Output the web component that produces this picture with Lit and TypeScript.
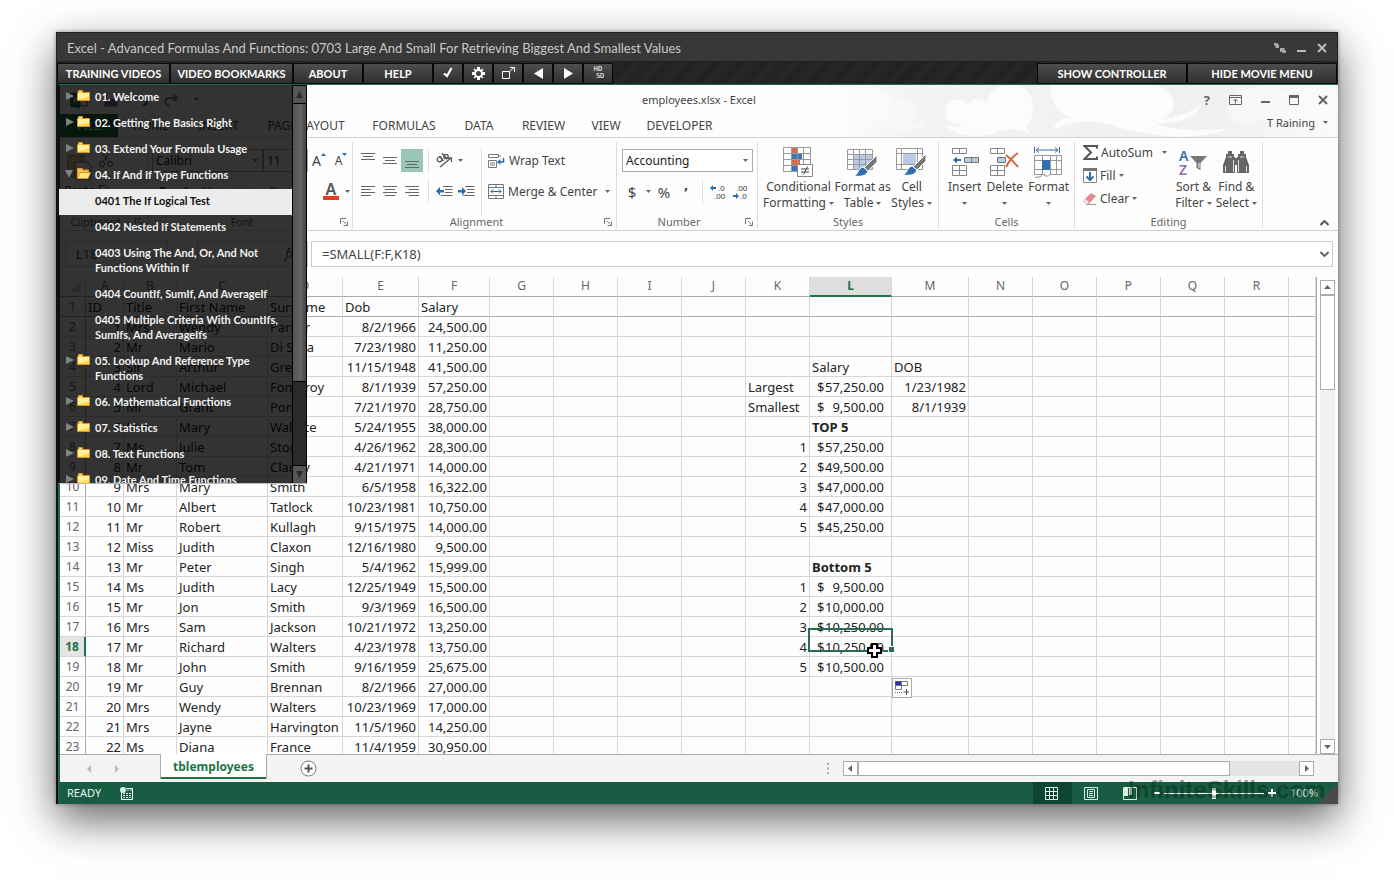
import { LitElement, html, svg, css, nothing } from "lit";
import { customElement, state } from "lit/decorators.js";
import { classMap } from "lit/directives/class-map.js";

const icon = (w: number, h: number, body: unknown) =>
  html`<svg class="ico" width=${w} height=${h} viewBox="0 0 ${w} ${h}" aria-hidden="true">${body}</svg>`;

const caret = () => icon(5, 3, svg`<path d="M0 0h5L2.5 3z" fill="#666"/>`);

const lines = (rows: number[][]) =>
  svg`${rows.map(([x, y, w]) => svg`<rect x=${x} y=${y} width=${w} height="1" fill="#666"/>`)}`;

const launcher = () =>
  icon(8, 8, svg`<path d="M.5 6V.5H6M3 3l3.500 3.500M7.500 3.500v4h-4" fill="none" stroke="#777"/>`);

const I = {
  compress: () => icon(12, 10, svg`<path d="M0 0h3l2 2 0-1v4H1l1-1-2-2zM12 10H9L7 8v1H6V5h5l-1 1 2 2z" fill="#aaa"/>`),
  min: () => icon(9, 8, svg`<path d="M0 6h9v2H0z" fill="#bbb"/>`),
  close: () => icon(10, 10, svg`<path d="M1 1l8 8M9 1L1 9" stroke="#bbb" stroke-width="2" fill="none"/>`),
  check: () => icon(12, 12, svg`<path d="M2 6.500L5 9l4.500-8" stroke="#fff" stroke-width="2.200" fill="none"/>`),
  gear: () => icon(13, 13, svg`<g fill="none" stroke="#fff"><circle cx="6.500" cy="6.500" r="3.500" stroke-width="2"/><path d="M6.500 0v3M6.500 10v3M0 6.500h3M10 6.500h3" stroke-width="3"/><path d="M2 2l2 2M9 9l2 2M11 2L9 4M4 9l-2 2" stroke-width="1.500"/></g>`),
  pop: () => icon(13, 12, svg`<path d="M.5 4.500h7v7h-7zM7 5l5-4.500M8 .5h4.500V5" fill="none" stroke="#fff"/>`),
  prev: () => icon(9, 11, svg`<path d="M9 0v11L0 5.500z" fill="#fff"/>`),
  next: () => icon(9, 11, svg`<path d="M0 0v11l9-5.500z" fill="#fff"/>`),
  folder: () => icon(13, 11, svg`<path d="M.5 2.500h1v-2h4v2h7v8H.5z" fill="#ffd94a" stroke="#d9952b"/><path d="M1 3h11v3.500L1 9.500z" fill="#fff0a0"/><path d="M2 1h3v2H2z" fill="#ffd94a"/>`),
  folderOpen: () => icon(14, 11, svg`<path d="M.5 10.500v-10h5v1.500h6v3" fill="#f3c44d" stroke="#d9952b"/><path d="M3 4.500h10.500l-2.500 6H.5z" fill="#ffe680" stroke="#d9952b"/>`),
  growFont: () => html`<span class="big-a">A</span>${icon(5, 3, svg`<path d="M0 3h5L2.500 0z" fill="#2d6da8"/>`)}`,
  shrinkFont: () => html`<span class="small-a">A</span>${icon(5, 3, svg`<path d="M0 0h5L2.500 3z" fill="#2d6da8"/>`)}`,
  top: () => icon(14, 16, lines([[0, 0, 14], [2, 3, 10], [0, 6, 14]])),
  mid: () => icon(14, 16, lines([[0, 4, 14], [2, 7, 10], [0, 10, 14]])),
  bot: () => icon(14, 16, lines([[0, 8, 14], [2, 11, 10], [0, 14, 14]])),
  left: () => icon(14, 11, lines([[0, 0, 14], [0, 3, 10], [0, 6, 14], [0, 9, 10]])),
  center: () => icon(14, 11, lines([[0, 0, 14], [2, 3, 10], [0, 6, 14], [2, 9, 10]])),
  right: () => icon(14, 11, lines([[0, 0, 14], [4, 3, 10], [0, 6, 14], [4, 9, 10]])),
  orient: () => icon(17, 15, svg`<g fill="none" stroke="#555" stroke-width="1.300"><circle cx="3.500" cy="6.500" r="2.300"/><path d="M3.500 3L7.500 8M6 0L11 6"/><circle cx="10" cy="3.500" r="2.200"/><path d="M4 14L15 5M11 5h4.500v4"/></g>`),
  outdent: () => icon(17, 11, svg`<path d="M7 1h9.500M9 4h7.500M9 7h7.500M5 10h11.500" stroke="#666" transform="translate(0 -.5)"/><path d="M0 5l4-4v3h4v2.500H4v3z" fill="#2d6da8"/>`),
  indent: () => icon(17, 11, svg`<path d="M7 1h9.500M9 4h7.500M9 7h7.500M5 10h11.500" stroke="#666" transform="translate(0 -.5)"/><path d="M8 5L4 1v3H0v2.500h4v3z" fill="#2d6da8"/>`),
  wrap: () => icon(17, 16, svg`<g fill="none" stroke="#777"><path d="M.5 1.500h10v3H.5zM.5 7.500h8v7h-8zM2 10h5M2 12h5M10 3h3"/></g><path d="M15.500 5v4H12" fill="none" stroke="#2d6da8" stroke-width="1.500"/><path d="M9 9l3.500-3v6z" fill="#2d6da8"/>`),
  merge: () => icon(16, 15, svg`<path d="M.5 .5h15v14H.5zM.5 3.500h15M.5 11.500h15M8 .5v3M8 11.500v3" fill="none" stroke="#777"/><path d="M3 7.500h10M5 5.500l-2 2 2 2M11 5.500l2 2-2 2" fill="none" stroke="#2d6da8"/>`),
  decInc: () => icon(16, 16, svg`<path d="M0 4l3-3v2h3v2H3v2z" fill="#2d6da8"/><g font-family="Liberation Sans" font-size="8" fill="#333"><text x="8" y="7">.0</text><text x="4" y="15">.00</text></g>`),
  decDec: () => icon(16, 16, svg`<path d="M7 12L4 9v2H1v2h3v2z" fill="#2d6da8"/><g font-family="Liberation Sans" font-size="8" fill="#333"><text x="4" y="7">.00</text><text x="8" y="15">.0</text></g>`),
  cond: () => icon(31, 31, svg`<path d="M9 1h6v6H9zM9 13h8v6H9z" fill="#d9694a"/><path d="M9 7h10v6H9zM9 19h5v5H9z" fill="#3b74b9"/><path d="M.5 .5h27v24H.5zM.5 6.500h27M.5 12.500h27M.5 18.500h27M8.500 .5v24M14.500 .5v24M20.500 .5v24" fill="none" stroke="#999"/><path d="M14.500 17.500h15v12h-15z" fill="#fff" stroke="#888"/><path d="M18 22h8M18 25h8M24.500 19.500l-4 8" stroke="#444" fill="none"/>`),
  table: () => icon(31, 29, svg`<path d="M7 7h18v14H7z" fill="#b9cbe6"/><path d="M.5 1.500h25v20H.5zM.5 6.500h25M.5 11.500h25M.5 16.500h25M6.500 1.500v20M12.500 1.500v20M18.500 1.500v20" fill="none" stroke="#999"/><path d="M30 7v7l-9 9-4-3z" fill="#777" stroke="#fff"/><path d="M16 19l5 4c-2 5-7 6-14 5 4-1 4-8 9-9z" fill="#2f6fb0" stroke="#fff"/>`),
  style: () => icon(31, 31, svg`<path d="M.5 1.500h26v21H.5zM.5 6.500h26M.5 17.500h26M5.500 1.500v21M21.500 1.500v21" fill="none" stroke="#999"/><path d="M7 7h13v10H7z" fill="#b9cbe6"/><path d="M30 7v7l-9 9-4-3z" fill="#777" stroke="#fff"/><path d="M16 19l5 4c-2 5-7 6-14 5 4-1 4-8 9-9z" fill="#2f6fb0" stroke="#fff"/>`),
  insert: () => icon(28, 28, svg`<path d="M1.500 .5h14v5h-14zM8.500 .5v5M1.500 17.500h14v10h-14zM1.500 22.500h14M8.500 17.500v10" fill="#fff" stroke="#888"/><path d="M13.500 9.500h14v5h-14zM20.500 9.500v5" fill="#b9cbe6" stroke="#777"/><path d="M2 12l4-3.500v2.500h4v2H6v2.500z" fill="#2d6da8"/>`),
  del: () => icon(31, 28, svg`<path d="M1.500 .5h14v5h-14zM8.500 .5v5M1.500 17.500h14v10h-14zM1.500 22.500h14M8.500 17.500v10" fill="#fff" stroke="#888"/><path d="M8.500 9.500h8v5h-8z" fill="#b9cbe6" stroke="#777"/><path d="M17 7c4 3 8 7 12 12M29 5c-5 3-9 8-12 14" stroke="#d6643c" stroke-width="2" fill="none"/>`),
  format: () => icon(29, 31, svg`<path d="M.5 0v6M25.500 0v6M2 3h22M5 .5L2 3l3 2.500M21 .5L24 3l-3 2.500" fill="none" stroke="#2d6da8"/><path d="M.5 8.500h27v19H.5zM.5 13.500h27M.5 22.500h27M8.500 8.500v19M16.500 8.500v19M22.500 8.500v19" fill="none" stroke="#999"/><path d="M8 13h8v10H8z" fill="#2f6fb0"/><path d="M1 30c4 1 7-1 8-3 3 3 6 3 8-1" fill="#fff" stroke="#888"/>`),
  sum: () => icon(15, 15, svg`<path d="M14 3.500V1H1.500L8 7.500 1.500 14H14v-2.500" fill="none" stroke="#555" stroke-width="2"/>`),
  fill: () => icon(14, 15, svg`<path d="M.5 .5h13v14H.5z" fill="#fff" stroke="#888"/><path d="M0 0h14v3H0z" fill="#777"/><path d="M7 4v8M3.500 8.500L7 12l3.500-3.500" stroke="#2d6da8" stroke-width="2" fill="none"/>`),
  clear: () => icon(14, 12, svg`<path d="M8 0l5 3-7 8H3L0 8z" fill="#e58b8d"/><path d="M2.500 6L6 9l-1.500 2H3L0 8z" fill="#f6d9d9"/><path d="M3 11.500h10" stroke="#999"/>`),
  sort: () => icon(30, 30, svg`<g font-family="Noto Sans" font-size="14" font-weight="600"><text x="1" y="14" fill="#2f6fb0">A</text><text x="1" y="28" fill="#8c6bab">Z</text></g><path d="M12 9h17l-6.500 7v7l-4-2v-5z" fill="#777"/><path d="M21 16v5" stroke="#fff"/>`),
  find: () => icon(26, 24, svg`<g fill="#666"><path d="M5 1h4v3h2v3h1v16H0V15l3-8V4h2zM17 1h4v3h2v3l3 8v8H14V7h1V4h2z"/><path d="M11 8h4v7h-4z"/></g><path d="M2.500 16v6M23.500 16v6M10.500 10v12M15.500 10v12M5 7h4M17 7h4" stroke="#ddd"/>`),
  dispOpts: () => icon(13, 10, svg`<path d="M.5 .5h12v9H.5zM.5 2.500h12M6.500 8.500v-4M4.500 6l2-2 2 2" fill="none" stroke="#666"/>`),
  xMin: () => icon(9, 10, svg`<path d="M0 6h9v2H0z" fill="#666"/>`),
  xMax: () => icon(10, 10, svg`<path d="M.5 .5h9v9h-9z" fill="none" stroke="#666"/><path d="M0 0h10v3H0z" fill="#666"/>`),
  xClose: () => icon(10, 10, svg`<path d="M1 1l8 8M9 1L1 9" stroke="#666" stroke-width="2" fill="none"/>`),
  addSheet: () => icon(17, 17, svg`<circle cx="8.500" cy="8.500" r="7.500" fill="#fff" stroke="#777"/><path d="M8.500 4.500v8M4.500 8.500h8" stroke="#555" stroke-width="2"/>`),
  macro: () => icon(13, 13, svg`<path d="M1.500 4v8.500h11v-11H6" fill="none" stroke="#fff"/><circle cx="3" cy="3" r="3" fill="#d7efe4"/><path d="M3 6.500h9M3 8.500h9M3 10.500h9M7 3h5" stroke="#d7efe4" stroke-dasharray="2 1"/>`),
  vNormal: () => icon(14, 13, svg`<path d="M.5 .5h12v12H.5zM.5 4.500h12M.5 8.500h12M4.500 .5v12M8.500 .5v12" fill="none" stroke="#d7efe4"/>`),
  vPage: () => icon(15, 13, svg`<path d="M.5 .5h13v12H.5zM3.500 2.500h7v8h-7zM5 4.500h4M5 6.500h4M5 8.500h4" fill="none" stroke="#d7efe4"/>`),
  vBreak: () => icon(14, 13, svg`<path d="M.5 .5h13v12H.5z" fill="none" stroke="#d7efe4"/><path d="M1 1h4v8H1zM6 1h3v7H6z" fill="#d7efe4"/>`),
  cross: () => icon(16, 16, svg`<path d="M5 1h5v4h4v5h-4v4H5v-4H1V5h4z" fill="#fff" stroke="#000" stroke-width="2"/>`),
  paste: () => icon(26, 28, svg`<path d="M2 3h16v22H2z" fill="#e8c98a" stroke="#999"/><path d="M9 10h12l4 4v13H9z" fill="#fff" stroke="#777"/>`),
  cut: () => icon(14, 14, svg`<circle cx="3" cy="10" r="2.500" fill="none" stroke="#456"/><circle cx="11" cy="10" r="2.500" fill="none" stroke="#456"/><path d="M4 8l6-8M10 8L4 0" stroke="#456"/>`),
  copy: () => icon(14, 14, svg`<path d="M.5 .5h6l2 2v8h-8zM5.500 4.500h6l2 2v7h-8z" fill="#fff" stroke="#456"/>`),
};

interface Entry { label: string; kind: "folder" | "open" | "clip"; }
const ENTRIES: Entry[] = [
  { label: "01. Welcome", kind: "folder" },
  { label: "02. Getting The Basics Right", kind: "folder" },
  { label: "03. Extend Your Formula Usage", kind: "folder" },
  { label: "04. If And If Type Functions", kind: "open" },
  { label: "0401 The If Logical Test", kind: "clip" },
  { label: "0402 Nested If Statements", kind: "clip" },
  { label: "0403 Using The And, Or, And Not Functions Within If", kind: "clip" },
  { label: "0404 CountIf, SumIf, And AverageIf", kind: "clip" },
  { label: "0405 Multiple Criteria With CountIfs, SumIfs, And AverageIfs", kind: "clip" },
  { label: "05. Lookup And Reference Type Functions", kind: "folder" },
  { label: "06. Mathematical Functions", kind: "folder" },
  { label: "07. Statistics", kind: "folder" },
  { label: "08. Text Functions", kind: "folder" },
  { label: "09. Date And Time Functions", kind: "folder" },
];

const COLS = "ABCDEFGHIJKLMNOPQR".split("");
const WIDTHS = [38, 53, 91, 75, 76, 71, 64, 64, 64, 64, 64, 82, 77, 64, 64, 64, 64, 64];

const PEOPLE: string[][] = [
  ["ID", "Title", "First Name", "Surname", "Dob", "Salary"],
  ["1", "Mrs", "Wendy", "Parker", "8/2/1966", "24,500.00"],
  ["2", "Mr", "Mario", "Di Silva", "7/23/1980", "11,250.00"],
  ["3", "Sir", "Arthur", "Grey", "11/15/1948", "41,500.00"],
  ["4", "Lord", "Michael", "Fonteroy", "8/1/1939", "57,250.00"],
  ["5", "Mr", "Grant", "Pond", "7/21/1970", "28,750.00"],
  ["6", "Mrs", "Mary", "Wallace", "5/24/1955", "38,000.00"],
  ["7", "Ms", "Julie", "Stone", "4/26/1962", "28,300.00"],
  ["8", "Mr", "Tom", "Clancy", "4/21/1971", "14,000.00"],
  ["9", "Mrs", "Mary", "Smith", "6/5/1958", "16,322.00"],
  ["10", "Mr", "Albert", "Tatlock", "10/23/1981", "10,750.00"],
  ["11", "Mr", "Robert", "Kullagh", "9/15/1975", "14,000.00"],
  ["12", "Miss", "Judith", "Claxon", "12/16/1980", "9,500.00"],
  ["13", "Mr", "Peter", "Singh", "5/4/1962", "15,999.00"],
  ["14", "Ms", "Judith", "Lacy", "12/25/1949", "15,500.00"],
  ["15", "Mr", "Jon", "Smith", "9/3/1969", "16,500.00"],
  ["16", "Mrs", "Sam", "Jackson", "10/21/1972", "13,250.00"],
  ["17", "Mr", "Richard", "Walters", "4/23/1978", "13,750.00"],
  ["18", "Mr", "John", "Smith", "9/16/1959", "25,675.00"],
  ["19", "Mr", "Guy", "Brennan", "8/2/1966", "27,000.00"],
  ["20", "Mrs", "Wendy", "Walters", "10/23/1969", "17,000.00"],
  ["21", "Mrs", "Jayne", "Harvington", "11/5/1960", "14,250.00"],
  ["22", "Ms", "Diana", "France", "11/4/1959", "30,950.00"],
];

const SUMMARY: Record<string, string> = {
  L4: "Salary", M4: "DOB",
  K5: "Largest", L5: "$57,250.00", M5: "1/23/1982",
  K6: "Smallest", L6: "$9,500.00", M6: "8/1/1939",
  L7: "TOP 5",
  K8: "1", L8: "$57,250.00", K9: "2", L9: "$49,500.00", K10: "3", L10: "$47,000.00",
  K11: "4", L11: "$47,000.00", K12: "5", L12: "$45,250.00",
  L14: "Bottom 5",
  K15: "1", L15: "$9,500.00", K16: "2", L16: "$10,000.00", K17: "3", L17: "$10,250.00",
  K18: "4", L18: "$10,250.00", K19: "5", L19: "$10,500.00",
};

@customElement("course-menu")
export class CourseMenu extends LitElement {
  @state() private current = 4;

  static styles = css`
    :host { display: grid; grid-template-columns: 1fr 15px; box-sizing: border-box; overflow: hidden;
      border-left: 1px solid #111; border-bottom: 1px solid #bbb;
      background: rgba(0, 0, 0, 0.8); font: 700 11px/15px Lato, sans-serif; color: #f2f2f2; }
    .list { list-style: none; margin: 0; padding: 0; overflow: hidden; }
    .item { display: grid; grid-template-columns: 9px 15px 1fr; column-gap: 3px; width: 100%; border: 0;
      padding: 4px 10px 7px 6px; background: none; color: inherit; font: inherit; text-align: left; cursor: pointer; }
    .item.clip { display: block; padding-left: 36px; }
    .item.clip.on { background: #ececec; color: #111; }
    .arrow { margin-top: 3px; }
    .fold { margin-top: 1px; }
    .bar { display: flex; flex-direction: column; background: #2a2a2a; border: solid #000; border-width: 1px 1px 0 1px; }
    .step { height: 17px; box-sizing: border-box; border: 0; padding: 0; background: #555; display: grid; place-items: center; }
    .thumb { flex: 0 0 277px; background: linear-gradient(90deg, #555, #646464 60%, #444); border: solid #000; border-width: 1px 0; }
    .rest { flex: 1; border-bottom: 1px solid #000; }
    .ico { display: block; }
  `;

  render() {
    return html`
      <ul class="list">
        ${ENTRIES.map((e, i) => html`<li>
          <button class=${classMap({ item: true, clip: e.kind === "clip", on: i === this.current })}
            @click=${() => (this.current = i)}>
            ${e.kind === "clip" ? nothing : html`
              <span class="arrow">${e.kind === "open"
                ? icon(9, 8, svg`<path d="M0 0h8L4 8z" fill="#7d8583"/>`)
                : icon(9, 8, svg`<path d="M1 0v8l8-4z" fill="#7d8583"/>`)}</span>
              <span class="fold">${e.kind === "open" ? I.folderOpen() : I.folder()}</span>`}
            <span>${e.label}</span>
          </button></li>`)}
      </ul>
      <div class="bar">
        <button class="step" aria-label="Scroll up">${icon(7, 7, svg`<path d="M0 7h7L3.500 0z" fill="#2c2c2c"/>`)}</button>
        <div class="thumb"></div><div class="rest"></div>
        <button class="step" aria-label="Scroll down">${icon(7, 7, svg`<path d="M0 0h7L3.500 7z" fill="#2c2c2c"/>`)}</button>
      </div>`;
  }
}

@customElement("excel-ribbon")
export class ExcelRibbon extends LitElement {
  static styles = css`
    :host { display: flex; box-sizing: border-box; height: 93px; padding: 4px 0 2px; position: relative;
      border-bottom: 1px solid #d0d0d0; background: #fefefe; font: 12px/16px "Noto Sans", sans-serif; color: #444; }
    .ico { display: block; flex: none; }
    .group { box-sizing: border-box; display: flex; flex-direction: column; border-right: 1px solid #ddd; padding: 0 4px; position: relative; }
    .clipboard { width: 88px; } .font { width: 205px; } .align { width: 264px; } .number { width: 141px; }
    .styles { width: 181px; } .cells { width: 136px; } .edit { width: 188px; }
    .body { flex: 1; display: flex; padding-top: 7px; }
    .foot { display: flex; align-items: center; font-size: 11px; line-height: 12px; color: #666; text-align: center; }
    .foot span { flex: 1; }
    .foot .ico { margin-left: 8px; }
    button { border: 0; background: none; padding: 0; font: inherit; color: inherit; display: flex; align-items: center; cursor: pointer; white-space: nowrap; }
    .rows { display: grid; grid-auto-rows: 23px; row-gap: 8px; align-content: start; }
    .font .rows { flex: 1; }
    .row { display: flex; align-items: center; }
    .sq { width: 22px; height: 23px; justify-content: center; }
    .sq.on { background: #9bc8b6; }
    .drop { width: 10px; display: grid; place-items: center; }
    .far { margin-left: auto; }
    .sep { width: 1px; height: 23px; background: #ddd; margin: 0 4px 0 5px; }
    .wide { gap: 4px; padding-left: 6px; }
    .wide .ico:last-child { margin-left: 3px; }
    .wrapcol { border-left: 1px solid #ddd; margin-left: 4px; }
    select { appearance: none; border: 1px solid #ababab; border-radius: 0; background: #fff; color: #222; font: inherit; height: 23px; padding: 0 3px; margin: 0; }
    .pick { position: relative; display: flex; align-items: center; }
    .pick .ico { position: absolute; right: 5px; pointer-events: none; }
    .name { width: 111px; } .size { width: 45px; } .fmt { width: 131px; margin-left: 1px; }
    .big-a { font-size: 14px; } .small-a { font-size: 12px; }
    .sup { align-items: flex-start; justify-content: center; width: 22px; }
    .color { border-bottom: 4px solid #e33a22; font-size: 16px; line-height: 13px; font-weight: 600; padding: 0 3px; color: #555; }
    .glyph { font-size: 15px; }
    .gap-l { margin-left: 5px; }
    .big { flex-direction: column; align-items: center; text-align: center; }
    .pic { height: 34px; display: grid; place-items: center; }
    .two { display: flex; align-items: center; gap: 3px; }
    .down { height: 16px; display: flex; align-items: center; }
    .bigs { padding-top: 3px; justify-content: space-between; }
    .styles .bigs { padding-left: 1px; padding-right: 2px; }
    .cells .bigs { padding-left: 5px; padding-right: 1px; }
    .stack { display: grid; grid-auto-rows: 23px; align-content: start; margin-top: -8px; padding-left: 4px; }
    .stack button { gap: 3px; }
    .stack .gap { margin-left: 6px; }
    .azs { display: flex; gap: 4px; margin: -4px 0 0 auto; padding-right: 1px; }
    .fold { position: absolute; right: 9px; bottom: 4px; }
  `;

  private foot(label: string, launch = false) {
    return html`<div class="foot"><span>${label}</span>${launch ? launcher() : nothing}</div>`;
  }

  private big(pic: unknown, a: string, b?: string) {
    return html`<button class="big"><span class="pic">${pic}</span><span>${a}</span>
      ${b ? html`<span class="two">${b}${caret()}</span>` : html`<span class="down">${caret()}</span>`}</button>`;
  }

  render() {
    return html`
      <div class="group clipboard">
        <div class="body">
          <button class="big"><span class="pic">${I.paste()}</span><span>Paste</span></button>
          <div class="rows"><button class="sq" aria-label="Cut">${I.cut()}</button><button class="sq" aria-label="Copy">${I.copy()}</button></div>
        </div>${this.foot("Clipboard", true)}
      </div>
      <div class="group font">
        <div class="body"><div class="rows">
          <div class="row">
            <label class="pick"><select class="name" aria-label="Font"><option>Calibri</option></select>${caret()}</label>
            <label class="pick"><select class="size" aria-label="Font size"><option>11</option></select></label>
            <button class="sup" aria-label="Increase font size">${I.growFont()}</button>
            <button class="sup" aria-label="Decrease font size">${I.shrinkFont()}</button>
          </div>
          <div class="row">
            <button class="sq"><b>B</b></button><button class="sq"><i>I</i></button><button class="sq"><u>U</u></button>
            <span class="sep"></span><button class="sq" aria-label="Borders">${I.vNormal()}</button>
            <span class="sep"></span><button class="sq" aria-label="Fill color">${I.clear()}</button>
            <button class="sq far" aria-label="Font color"><span class="color">A</span></button>
            <span class="drop">${caret()}</span>
          </div>
        </div></div>${this.foot("Font", true)}
      </div>
      <div class="group align">
        <div class="body">
          <div class="rows">
            <div class="row"><button class="sq" aria-label="Top align">${I.top()}</button><button class="sq" aria-label="Middle align">${I.mid()}</button><button class="sq on" aria-label="Bottom align">${I.bot()}</button><span class="sep"></span><button class="sq" aria-label="Orientation">${I.orient()}</button><span class="drop">${caret()}</span></div>
            <div class="row"><button class="sq" aria-label="Align left">${I.left()}</button><button class="sq" aria-label="Center">${I.center()}</button><button class="sq" aria-label="Align right">${I.right()}</button><span class="sep"></span><button class="sq" aria-label="Decrease indent">${I.outdent()}</button><button class="sq" aria-label="Increase indent">${I.indent()}</button></div>
          </div>
          <div class="rows wrapcol">
            <button class="wide">${I.wrap()}<span>Wrap Text</span></button>
            <button class="wide">${I.merge()}<span>Merge &amp; Center</span>${caret()}</button>
          </div>
        </div>${this.foot("Alignment", true)}
      </div>
      <div class="group number">
        <div class="body"><div class="rows">
          <label class="pick"><select class="fmt" aria-label="Number format"><option>Accounting</option></select>${caret()}</label>
          <div class="row">
            <button class="sq glyph" aria-label="Accounting format">$</button><span class="drop">${caret()}</span>
            <button class="sq glyph">%</button><button class="sq glyph" aria-label="Comma style"><b>&#8217;</b></button>
            <span class="sep"></span><button class="sq" aria-label="Increase decimal">${I.decInc()}</button><button class="sq" aria-label="Decrease decimal">${I.decDec()}</button>
          </div>
        </div></div>${this.foot("Number", true)}
      </div>
      <div class="group styles">
        <div class="body bigs">${this.big(I.cond(), "Conditional", "Formatting")}${this.big(I.table(), "Format as", "Table")}${this.big(I.style(), "Cell", "Styles")}</div>
        ${this.foot("Styles")}
      </div>
      <div class="group cells">
        <div class="body bigs">${this.big(I.insert(), "Insert")}${this.big(I.del(), "Delete")}${this.big(I.format(), "Format")}</div>
        ${this.foot("Cells")}
      </div>
      <div class="group edit">
        <div class="body">
          <div class="stack">
            <button>${I.sum()}<span>AutoSum</span><span class="gap">${caret()}</span></button>
            <button>${I.fill()}<span>Fill</span>${caret()}</button>
            <button>${I.clear()}<span>Clear</span>${caret()}</button>
          </div>
          <div class="azs">${this.big(I.sort(), "Sort &", "Filter")}${this.big(I.find(), "Find &", "Select")}</div>
        </div>${this.foot("Editing")}
      </div>
      <button class="fold" aria-label="Collapse the ribbon">${icon(9, 6, svg`<path d="M.5 5L4.500 1l4 4" fill="none" stroke="#555" stroke-width="2"/>`)}</button>`;
  }
}

@customElement("excel-sheet")
export class ExcelSheet extends LitElement {
  static styles = css`
    :host { display: block; overflow: hidden; border-right: 1px solid #ababab; background: #fefefe; }
    .grid { table-layout: fixed; width: 100%; border-collapse: separate; border-spacing: 0; font: 13px/18px "Noto Sans", sans-serif; color: #222; }
    .rowhead { width: 26px; }
    th, td { box-sizing: border-box; height: 20px; padding: 1px 2px 0; white-space: nowrap; border: solid #d6d6d6; border-width: 0 1px 1px 0; }
    th { font-weight: 400; color: #666; text-align: center; padding: 1px 0 0; font-size: 12px; }
    thead th { padding: 0 0 1px; border-bottom-color: #ababab; }
    tbody th { border-right-color: #ababab; }
    .split td, .split th { border-bottom-color: #ababab; }
    thead .on { background: #dedede; color: #217346; font-weight: 700; border-bottom: 2px solid #217346; padding: 0; }
    tbody .on { background: #e4e4e4; color: #217346; font-weight: 700; border-right: 2px solid #217346; }
    .num { text-align: right; }
    .strong { font-weight: 700; }
    .money { padding-left: 7px; padding-right: 7px; }
    .acct { display: flex; justify-content: space-between; }
    .cell { position: relative; }
    .sel { position: absolute; left: -2px; right: -2px; top: -9px; height: 24px; box-sizing: border-box; border: 2px solid #2c6b55; }
    .sel::after { content: ""; position: absolute; right: -3px; bottom: -2px; width: 5px; height: 5px; background: #2c6b55; border: solid #fff; border-width: 1px 0 0 1px; }
    .cursor { position: absolute; left: 57px; top: 6px; }
    .fill { position: absolute; left: 82px; top: 41px; width: 20px; height: 20px; box-sizing: border-box; padding: 2px; border: 1px solid #aaa; background: #fff; }
    .ico { display: block; }
  `;

  private cell(col: string, row: number, c: number) {
    const v = c < 6 ? PEOPLE[row - 1][c] : SUMMARY[col + row] ?? "";
    const money = v.startsWith("$");
    const numeric = /^[\d,./]+$/.test(v);
    const active = col === "L" && row === 18;
    return html`<td class=${classMap({ num: numeric, money, cell: active, strong: v === "TOP 5" || v === "Bottom 5" })}
      >${money ? html`<span class="acct"><span>$</span><span>${v.slice(1)}</span></span>` : v}${active
        ? html`<span class="sel"></span>
          <button class="fill" aria-label="Auto fill options">${icon(14, 14, svg`<path d="M.5 .5h6v4h-6z" fill="#1d36c0" stroke="#555"/><path d="M6.500 .5h6v4h-6zM.5 4.500h6v4h-6z" fill="#fff" stroke="#777"/><path d="M0 11.500h7" stroke="#777" stroke-dasharray="1 1"/><path d="M11.500 8v6M8.500 11h6" stroke="#555"/>`)}</button>
          <span class="cursor">${I.cross()}</span>`
        : nothing}</td>`;
  }

  render() {
    return html`<table class="grid">
      <colgroup><col class="rowhead">${WIDTHS.map((w) => html`<col style="width:${w}px">`)}<col></colgroup>
      <thead><tr><th>${icon(24, 16, svg`<path d="M21 3v11H10z" fill="#ccc"/>`)}</th>
        ${COLS.map((c) => html`<th scope="col" class=${classMap({ on: c === "L" })}>${c}</th>`)}<th></th></tr></thead>
      <tbody>${PEOPLE.map((_, i) => html`<tr class=${classMap({ split: i === 0 })}>
        <th scope="row" class=${classMap({ on: i === 17 })}>${i + 1}</th>
        ${COLS.map((c, n) => this.cell(c, i + 1, n))}<td></td></tr>`)}</tbody>
    </table>`;
  }
}

@customElement("app-root")
export class AppRoot extends LitElement {
  static styles = css`
    :host { display: flex; box-sizing: border-box; height: 100vh; padding: 32px 56px 80px; background: #fff; overflow: hidden; }
    .window { flex: 1; min-width: 0; display: flex; flex-direction: column; position: relative; background: #111; box-shadow: 0 16px 40px rgba(0, 0, 0, 0.6), 0 0 4px rgba(0, 0, 0, 0.4); }
    .ico { display: block; flex: none; }
    button { border: 0; background: none; padding: 0; font: inherit; color: inherit; cursor: pointer; }
    .title { height: 30px; box-sizing: border-box; display: flex; align-items: center; padding: 1px 10px 0; background: #383838; border: 1px solid #222; color: #c9c9c9; font: 13px/18px Lato, sans-serif; }
    .title h1 { flex: 1; margin: 0; font: inherit; }
    .wins { display: flex; align-items: center; gap: 11px; }
    .bar { display: flex; gap: 2px; padding: 2px 2px 1px; background: repeating-linear-gradient(135deg, #222 0 8px, #262626 8px 16px); font: 700 11px/17px Lato, sans-serif; color: #fff; }
    .bar button { height: 19px; box-sizing: border-box; padding-bottom: 1px; background: linear-gradient(#4d4d4d, #303030); box-shadow: 0 0 0 1px #080808; display: grid; place-items: center; white-space: nowrap; }
    .w1 { width: 111px; } .w2 { width: 121px; } .w3 { width: 68px; } .w4 { width: 28px; } .w5 { width: 148px; }
    .push { margin-left: auto; }
    .bar .hd { font: 7px/7px "DejaVu Sans Mono", monospace; text-align: center; }
    .excel { flex: 1; min-height: 0; display: flex; flex-direction: column; margin-left: 2px; border: solid #1e6b50; border-width: 1px 0 0 2px; background: #fefefe; font: 12px/16px "Noto Sans", sans-serif; color: #444; }
    .head { position: relative; border-bottom: 1px solid #d0d0d0; }
    .sky { position: absolute; right: 0; top: 0; display: block; }
    .name { position: relative; display: grid; grid-template-columns: 1fr auto 1fr; align-items: center; height: 29px; }
    .name .file { grid-column: 2; color: #444; font-size: 11px; }
    .quick { display: flex; gap: 16px; align-items: center; padding-left: 10px; }
    .sys { display: flex; justify-content: flex-end; align-items: center; gap: 19px; padding-right: 10px; }
    .help { font-weight: 700; font-size: 13px; color: #666; }
    .tabs { position: relative; display: flex; justify-content: space-between; height: 23px; }
    .tablist { display: grid; grid-template-columns: 58px 66px 69px 106px 90px 60px 69px 56px 91px; }
    .tablist button { text-align: center; white-space: nowrap; }
    .tablist .file-tab { background: #217346; color: #fff; }
    .user { display: flex; align-items: center; gap: 8px; padding: 0 10px 6px 0; font-size: 11px; }
    .fx { display: flex; padding: 10px 5px; background: #fefefe; }
    .fx input { box-sizing: border-box; height: 26px; border: 1px solid #ccc; padding: 0 10px; font: 13px "Noto Sans", sans-serif; color: #444; background: #fff; min-width: 0; }
    .cellref { width: 103px; }
    .fns { width: 111px; margin: 0 3px 0 29px; box-sizing: border-box; border: 1px solid #ccc; display: flex; align-items: center; justify-content: flex-end; padding-right: 12px; font-style: italic; }
    .formula { flex: 1; position: relative; display: flex; align-items: center; }
    .formula input { width: 100%; }
    .formula .ico { position: absolute; right: 4px; }
    .main { flex: 1; min-height: 0; display: flex; }
    .main excel-sheet { flex: 1; min-width: 0; }
    .vs { flex: none; display: flex; flex-direction: column; width: 15px; margin: 3px 3px 0; background: #f1f1f1; }
    .step { box-sizing: border-box; width: 15px; height: 15px; border: 1px solid #ababab; background: #fff; display: grid; place-items: center; flex: none; }
    .vthumb { height: 20%; box-sizing: border-box; border: 1px solid #ababab; background: #fff; margin-bottom: auto; }
    .sheets { height: 28px; box-sizing: border-box; display: flex; align-items: center; background: #f3f3f3; border-top: 1px solid #ababab; padding: 0 24px 0 27px; }
    .navs { display: flex; gap: 24px; width: 73px; }
    .sheet { align-self: stretch; margin: -1px 0 3px; width: 107px; box-sizing: border-box; background: #fff; border: solid #ababab; border-width: 0 1px; box-shadow: inset 0 -2px #217346; color: #217346; font-weight: 700; }
    .add { margin-left: 33px; }
    .dots { margin: 0 14px 0 auto; }
    .hs { display: flex; width: 38.400%; background: #e4e5e3; height: 15px; }
    .hthumb { flex: 0 0 79%; box-sizing: border-box; border: 1px solid #ababab; background: #fff; margin-right: auto; }
    .status { flex: none; height: 22px; display: flex; align-items: center; background: #185c43; color: #e4f3ec; font-size: 11px; padding-left: 8px; margin-left: -1px; }
    .status .ready { margin-right: 19px; }
    .views { margin-left: auto; display: flex; align-self: stretch; }
    .views button { width: 39px; display: grid; place-items: center; }
    .views .on { background: #0d4630; }
    .zoom { display: flex; align-items: center; gap: 4px; margin-left: 4px; }
    .zoom input { appearance: none; width: 100px; height: 14px; margin: 0; background: linear-gradient(#fff, #fff) center / 100% 1px no-repeat; }
    .zoom input::-webkit-slider-thumb { appearance: none; width: 4px; height: 11px; background: #fff; }
    .pct { margin: 0 20px 0 14px; }
    course-menu { position: absolute; left: 2px; top: 53px; width: 249px; height: 399px; }
    .mark { position: absolute; right: 0; bottom: 0; width: 210px; font: 700 24px/28px "Liberation Sans", sans-serif; color: rgba(0, 30, 15, 0.4); white-space: nowrap; pointer-events: none; }
    .grip { position: absolute; right: 0; bottom: 0; width: 20px; height: 20px; background: linear-gradient(135deg, transparent 50%, #4a4a4a 50%); }
  `;

  private tri(d: string) {
    return icon(7, 7, svg`<path d=${d} fill="#666"/>`);
  }

  render() {
    const tabs = ["FILE", "HOME", "INSERT", "PAGE LAYOUT", "FORMULAS", "DATA", "REVIEW", "VIEW", "DEVELOPER"];
    return html`<div class="window">
      <header class="title">
        <h1>Excel - Advanced Formulas And Functions: 0703 Large And Small For Retrieving Biggest And Smallest Values</h1>
        <div class="wins">
          <button aria-label="Restore">${I.compress()}</button><button aria-label="Minimize">${I.min()}</button><button aria-label="Close">${I.close()}</button>
        </div>
      </header>
      <nav class="bar">
        <button class="w1">TRAINING VIDEOS</button><button class="w2">VIDEO BOOKMARKS</button><button class="w3">ABOUT</button><button class="w3">HELP</button>
        <button class="w4" aria-label="Mark watched">${I.check()}</button><button class="w4" aria-label="Settings">${I.gear()}</button>
        <button class="w4" aria-label="Pop out">${I.pop()}</button><button class="w4" aria-label="Previous">${I.prev()}</button>
        <button class="w4" aria-label="Next">${I.next()}</button><button class="w4 hd"><span>HD<br>&nbsp;SD</span></button>
        <button class="w5 push">SHOW CONTROLLER</button><button class="w5">HIDE MOVIE MENU</button>
      </nav>
      <main class="excel">
        <div class="head">
          <svg class="sky" width="510" height="52" viewBox="0 0 510 52" aria-hidden="true">
            <defs><linearGradient id="haze"><stop offset="0" stop-color="#fefefe"/><stop offset=".16" stop-color="#f3f3f3"/><stop offset=".75" stop-color="#f0f0f0"/><stop offset="1" stop-color="#fafafa"/></linearGradient></defs>
            <path d="M0 0h510v52H0z" fill="url(#haze)"/>
            <g fill="#fcfcfc">
              <path d="M30 30C24 16 30 3 46 3c12 0 18 7 20 13 10-6 24 0 24 11 0 8-5 11-12 11H40c20 2 35 2 58-2-6 9-20 12-34 8-12-3-22-6-34-4z" opacity=".6"/>
              <path d="M118 32c-3-10 3-17 12-17 6 0 9 3 10 5 4-8 14-8 18-2C160 6 170 0 184 0c18 0 23 16 20 30-1 6-3 10-6 12l6 8c-12-8-24-7-40-1-20 4-38 1-50-10 10 4 18 3 24 1-12 0-18-3-20-8z"/>
              <path d="M222 0h108c24 12 16 30 4 34 20-2 34-10 38-15 0 14-24 20-44 19 20 10 52 6 72 6-30 12-80 8-110-2-24-7-44-8-64 3 0-8 8-12 16-12-10-6-20-14-20-33z"/>
              <path d="M400 16c14-16 40-18 56-8 14-8 40-6 54 6v16c-30 12-60 8-76 4-10 6-26 6-34-2z" opacity=".6"/>
            </g>
          </svg>
          <div class="name">
            <div class="quick">${icon(18, 16, svg`<path d="M0 1l10-1v16L0 15z" fill="#217346"/><path d="M10 2h7v12h-7z" fill="#fff" stroke="#217346"/><path d="M3 5l4 6M7 5l-4 6" stroke="#fff"/>`)}${icon(14, 14, svg`<path d="M.5 .5h13v13H.5z" fill="#8166a8"/><path d="M3 1h8v5H3z" fill="#fff"/>`)}${icon(14, 12, svg`<path d="M1 4h8c5 0 5 7 0 7M4 1L1 4l3 3" fill="none" stroke="#2d6da8" stroke-width="2"/>`)}${icon(14, 12, svg`<path d="M13 4H5C0 4 0 11 5 11M10 1l3 3-3 3" fill="none" stroke="#888" stroke-width="2"/>`)}${caret()}</div>
            <span class="file">employees.xlsx - Excel</span>
            <div class="sys"><button class="help">?</button><button aria-label="Ribbon display options">${I.dispOpts()}</button><button aria-label="Minimize workbook">${I.xMin()}</button><button aria-label="Maximize workbook">${I.xMax()}</button><button aria-label="Close workbook">${I.xClose()}</button></div>
          </div>
          <div class="tabs">
            <div class="tablist">${tabs.map((t, i) => html`<button class=${classMap({ "file-tab": i === 0 })}>${t}</button>`)}</div>
            <button class="user">T Raining ${caret()}</button>
          </div>
        </div>
        <excel-ribbon></excel-ribbon>
        <div class="fx">
          <input class="cellref" aria-label="Name box" value="L18">
          <span class="fns">fx</span>
          <div class="formula"><input aria-label="Formula" value="=SMALL(F:F,K18)">${icon(9, 6, svg`<path d="M.5 1l4 4 4-4" fill="none" stroke="#666" stroke-width="2"/>`)}</div>
        </div>
        <div class="main">
          <excel-sheet></excel-sheet>
          <div class="vs">
            <button class="step" aria-label="Scroll up">${this.tri("M0 5h7L3.500 1z")}</button><div class="vthumb"></div>
            <button class="step" aria-label="Scroll down">${this.tri("M0 2h7L3.500 6z")}</button>
          </div>
        </div>
        <div class="sheets">
          <div class="navs">${icon(4, 8, svg`<path d="M4 0v8L0 4z" fill="#bbb"/>`)}${icon(4, 8, svg`<path d="M0 0v8l4-4z" fill="#bbb"/>`)}</div>
          <button class="sheet">tblemployees</button>
          <button class="add" aria-label="New sheet">${I.addSheet()}</button>
          <span class="dots">${icon(2, 11, svg`<path d="M0 0h2v2H0zM0 4.500h2v2H0zM0 9h2v2H0z" fill="#aaa"/>`)}</span>
          <div class="hs">
            <button class="step" aria-label="Scroll left">${this.tri("M5 0v7L1 3.500z")}</button><div class="hthumb"></div>
            <button class="step" aria-label="Scroll right">${this.tri("M2 0v7l4-3.500z")}</button>
          </div>
        </div>
        <footer class="status">
          <span class="ready">READY</span>${I.macro()}
          <div class="views"><button class="on" aria-label="Normal view">${I.vNormal()}</button><button aria-label="Page layout view">${I.vPage()}</button><button aria-label="Page break preview">${I.vBreak()}</button></div>
          <div class="zoom">${icon(6, 2, svg`<path d="M0 0h6v2H0z" fill="#fff"/>`)}<input type="range" min="0" max="100" value="50" aria-label="Zoom">${icon(8, 8, svg`<path d="M3 0h2v3h3v2H5v3H3V5H0V3h3z" fill="#fff"/>`)}</div>
          <span class="pct">100%</span>
        </footer>
      </main>
      <course-menu></course-menu>
      <div class="mark">InfiniteSkills.com</div>
      <div class="grip"></div>
    </div>`;
  }
}
